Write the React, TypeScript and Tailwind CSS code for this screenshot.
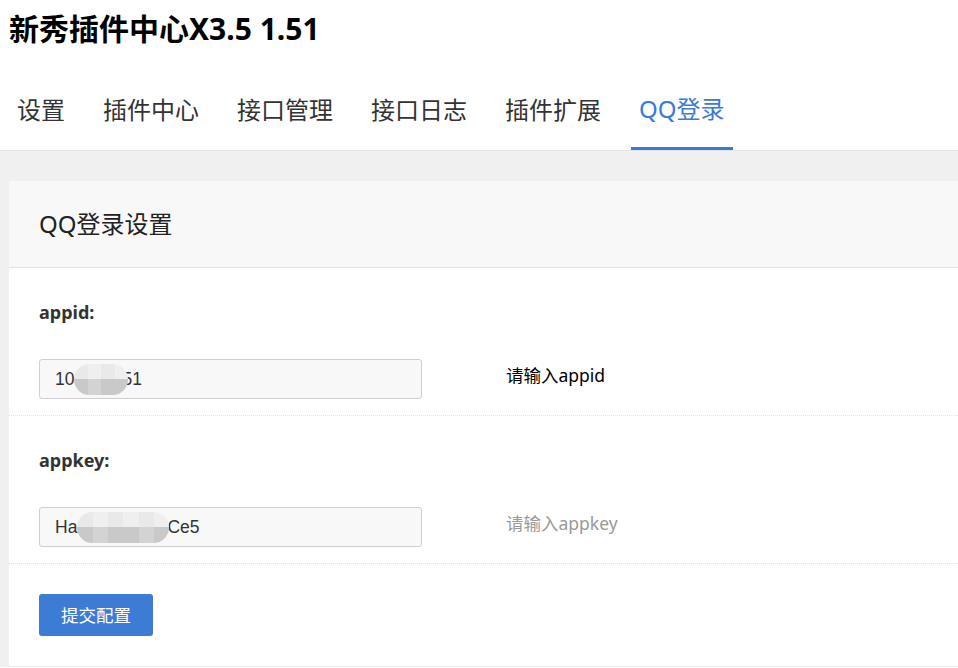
import { ReactNode } from "react";

const tabs = ["设置", "插件中心", "接口管理", "接口日志", "插件扩展", "QQ登录"];

// pixelated smudge used to hide part of a stored secret
function Smudge({ width }: { width: number }) {
  const cells = Math.round(width / 15);
  return (
    <span
      className="relative inline-flex flex-col h-[31px] align-middle overflow-hidden rounded-full"
      style={{ width }}
    >
      <span className="flex h-1/2">
        {Array.from({ length: cells }).map((_, i) => (
          <span key={i} className={`flex-1 ${i % 2 ? "bg-[#efefef]" : "bg-[#e9e9e9]"}`} />
        ))}
      </span>
      <span className="flex h-1/2">
        {Array.from({ length: cells }).map((_, i) => (
          <span key={i} className={`flex-1 ${i % 3 === 1 ? "bg-[#d3d3d3]" : "bg-[#c9c9c9]"}`} />
        ))}
      </span>
    </span>
  );
}

function Field({ label, value, hint, muted }: { label: string; value: ReactNode; hint: string; muted?: boolean }) {
  return (
    <div className="px-[30px] pt-[32px] pb-[16px] border-b border-dotted border-[#d6e8f4]">
      <div className="text-[18px] leading-[24px] font-bold text-[#333]">{label}</div>
      <div className="mt-[35px] flex items-center">
        <div className="w-[383px] h-[40px] flex items-center px-[15px] bg-[#f8f8f8] border border-[#cfcfcf] rounded-[3px] text-[17.5px] text-[#333] font-['Liberation_Sans',sans-serif] whitespace-nowrap overflow-hidden">
          {value}
        </div>
        <div className={`ml-[84px] pb-[7px] text-[17.5px] ${muted ? "text-[#999]" : "text-black"}`}>{hint}</div>
      </div>
    </div>
  );
}

export default function App() {
  return (
    <div className="min-h-[668px] bg-white font-['Noto_Sans','Noto_Sans_CJK_SC',sans-serif] text-[#333]">
      <div className="h-[56px] flex items-center px-[9px] text-[30px] font-bold text-black">
        新秀插件中心X3.5 1.51
      </div>

      <div className="mt-[16px] h-[79px] flex px-[9px] gap-[22px] border-b border-[#e2e2e2]">
        {tabs.map((t, i) => {
          const active = i === tabs.length - 1;
          return (
            <div
              key={t}
              className={`h-full flex items-center pb-[2px] px-[8px] text-[24px] ${
                active ? "text-[#3a7bd5] border-b-[3px] border-[#3a7bd5] -mb-px" : "text-[#333]"
              }`}
            >
              {t}
            </div>
          );
        })}
      </div>

      <div className="bg-[#f0f0f0] pl-[9px] pt-[30px]">
        <div className="bg-white border-b border-[#eeeeee]">
          <div className="h-[87px] flex items-center px-[30px] bg-[#f8f8f8] border-b border-[#e2e2e2] text-[24px] text-[#222]">
            QQ登录设置
          </div>

          <Field
            label="appid:"
            value={
              <>
                <span>10</span>
                <Smudge width={54} />
                <span className="-ml-[6px]">51</span>
              </>
            }
            hint="请输入appid"
          />
          <Field
            label="appkey:"
            value={
              <>
                <span>Ha</span>
                <Smudge width={92} />
                <span className="-ml-[2px]">Ce5</span>
              </>
            }
            hint="请输入appkey"
            muted
          />

          <div className="px-[30px] pt-[30px] pb-[30px]">
            <button className="w-[114px] h-[42px] rounded-[3px] bg-[#3c7cd4] text-white text-[17.5px]">
              提交配置
            </button>
          </div>
        </div>
      </div>
    </div>
  );
}
